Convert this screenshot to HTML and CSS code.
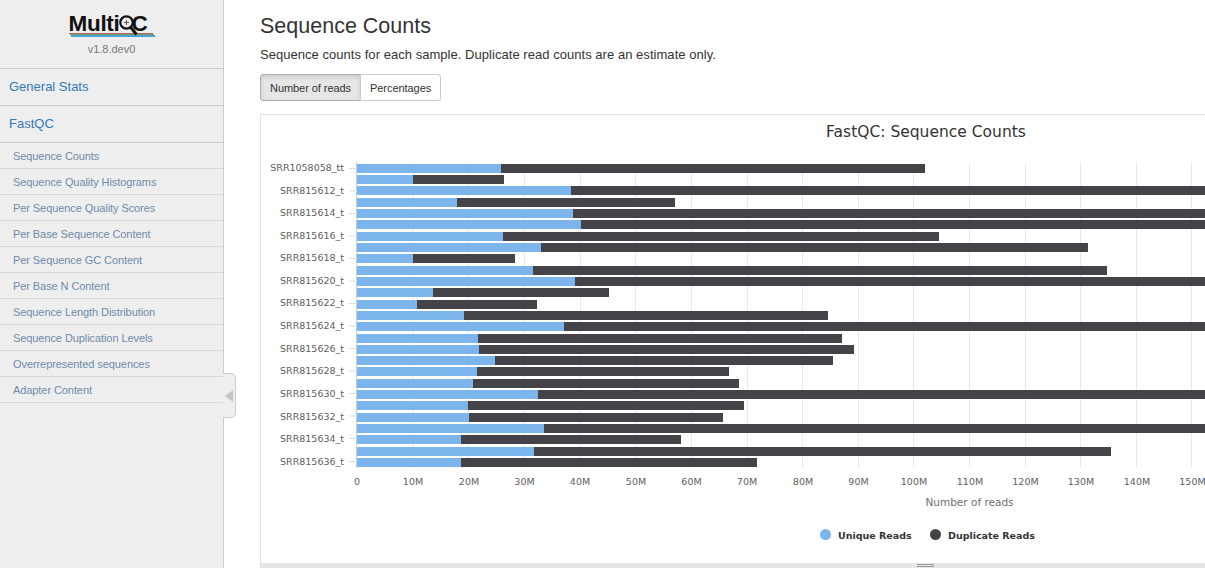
FILE: index.html
```html
<!DOCTYPE html>
<html lang="en">
<head>
<meta charset="utf-8">
<title>MultiQC Report</title>
<link rel="stylesheet" href="styles.css">
</head>
<body>
<div class="page">
  <nav class="sidebar">
    <div class="brand">
      <div class="logo">
        <span class="logo-word">Multi</span>
        <svg class="logo-q" width="21" height="24" viewBox="0 0 21 24"><circle cx="7.500" cy="8.500" r="6.200" fill="none" stroke="#111" stroke-width="2.200"/><path d="M7.500 6v5M5 8.500h5" stroke="#555" stroke-width="1"/><path d="M11.500 13l6 7.500" stroke="#111" stroke-width="3"/></svg>
        <span class="logo-word logo-c">C</span>
      </div>
      <div class="stripes"><i class="s-red"></i><i class="s-green"></i><i class="s-blue"></i></div>
      <div class="version">v1.8.dev0</div>
    </div>
    <ul class="menu">
      <li class="top"><a>General Stats</a></li>
      <li class="top"><a>FastQC</a></li>
      <li class="sub"><a>Sequence Counts</a></li>
      <li class="sub"><a>Sequence Quality Histograms</a></li>
      <li class="sub"><a>Per Sequence Quality Scores</a></li>
      <li class="sub"><a>Per Base Sequence Content</a></li>
      <li class="sub"><a>Per Sequence GC Content</a></li>
      <li class="sub"><a>Per Base N Content</a></li>
      <li class="sub"><a>Sequence Length Distribution</a></li>
      <li class="sub"><a>Sequence Duplication Levels</a></li>
      <li class="sub"><a>Overrepresented sequences</a></li>
      <li class="sub"><a>Adapter Content</a></li>
    </ul>
    <div class="toggle"><span class="arrow"></span></div>
  </nav>
  <main class="content">
    <h3 class="title">Sequence Counts</h3>
    <p class="lead">Sequence counts for each sample. Duplicate read counts are an estimate only.</p>
    <div class="btn-group">
      <button class="btn active">Number of reads</button>
      <button class="btn">Percentages</button>
    </div>
    <div class="panel">
      <svg class="chart" width="1330" height="448" viewBox="261 115 1330 448">
        <text class="chart-title" x="926" y="137" text-anchor="middle">FastQC: Sequence Counts</text>
        <g class="grid">
          <path d="M413 163V468M468.500 163V468M524.500 163V468M580.500 163V468M635.500 163V468M691.500 163V468M747.500 163V468M802.500 163V468M858.500 163V468M913.500 163V468M969.500 163V468M1025.500 163V468M1080.500 163V468M1136.500 163V468M1191.500 163V468"/>
        </g>
        <path class="axis" d="M356.500 163V468"/>
        <path class="tick" d="M349 168.500H357M349 191H357M349 213.500H357M349 236H357M349 258.500H357M349 281H357M349 303.500H357M349 326H357M349 348.500H357M349 371H357M349 393.500H357M349 416H357M349 438.500H357M349 461.500H357"/>
        <g class="blue">
          <rect x="357" y="164" width="144" height="9"/><rect x="357" y="175" width="56" height="9"/><rect x="357" y="186" width="214" height="9"/><rect x="357" y="198" width="100" height="9"/><rect x="357" y="209" width="216" height="9"/><rect x="357" y="220" width="224" height="9"/><rect x="357" y="232" width="146" height="9"/><rect x="357" y="243" width="184" height="9"/><rect x="357" y="254" width="56" height="9"/><rect x="357" y="266" width="176" height="9"/><rect x="357" y="277" width="218" height="9"/><rect x="357" y="288" width="76" height="9"/><rect x="357" y="300" width="60" height="9"/><rect x="357" y="311" width="107" height="9"/><rect x="357" y="322" width="207" height="9"/><rect x="357" y="334" width="121" height="9"/><rect x="357" y="345" width="122" height="9"/><rect x="357" y="356" width="138" height="9"/><rect x="357" y="367" width="120" height="9"/><rect x="357" y="379" width="116" height="9"/><rect x="357" y="390" width="181" height="9"/><rect x="357" y="401" width="111" height="9"/><rect x="357" y="413" width="112" height="9"/><rect x="357" y="424" width="187" height="9"/><rect x="357" y="435" width="104" height="9"/><rect x="357" y="447" width="177" height="9"/><rect x="357" y="458" width="104" height="9"/>
        </g>
        <g class="dark">
          <rect x="501" y="164" width="424" height="9"/><rect x="413" y="175" width="91" height="9"/><rect x="571" y="186" width="700" height="9"/><rect x="457" y="198" width="218" height="9"/><rect x="573" y="209" width="700" height="9"/><rect x="581" y="220" width="700" height="9"/><rect x="503" y="232" width="436" height="9"/><rect x="541" y="243" width="547" height="9"/><rect x="413" y="254" width="102" height="9"/><rect x="533" y="266" width="574" height="9"/><rect x="575" y="277" width="700" height="9"/><rect x="433" y="288" width="176" height="9"/><rect x="417" y="300" width="120" height="9"/><rect x="464" y="311" width="364" height="9"/><rect x="564" y="322" width="700" height="9"/><rect x="478" y="334" width="364" height="9"/><rect x="479" y="345" width="375" height="9"/><rect x="495" y="356" width="338" height="9"/><rect x="477" y="367" width="252" height="9"/><rect x="473" y="379" width="266" height="9"/><rect x="538" y="390" width="700" height="9"/><rect x="468" y="401" width="276" height="9"/><rect x="469" y="413" width="254" height="9"/><rect x="544" y="424" width="700" height="9"/><rect x="461" y="435" width="220" height="9"/><rect x="534" y="447" width="577" height="9"/><rect x="461" y="458" width="296" height="9"/>
        </g>
        <g class="ylabels" text-anchor="end">
          <text x="344" y="171">SRR1058058_tt</text><text x="344" y="194">SRR815612_t</text><text x="344" y="216">SRR815614_t</text><text x="344" y="239">SRR815616_t</text><text x="344" y="261">SRR815618_t</text><text x="344" y="284">SRR815620_t</text><text x="344" y="306">SRR815622_t</text><text x="344" y="329">SRR815624_t</text><text x="344" y="352">SRR815626_t</text><text x="344" y="374">SRR815628_t</text><text x="344" y="397">SRR815630_t</text><text x="344" y="420">SRR815632_t</text><text x="344" y="442">SRR815634_t</text><text x="344" y="465">SRR815636_t</text>
        </g>
        <g class="xlabels" text-anchor="middle">
          <text x="357" y="485">0</text><text x="413" y="485">10M</text><text x="469" y="485">20M</text><text x="524.500" y="485">30M</text><text x="580" y="485">40M</text><text x="636" y="485">50M</text><text x="691.500" y="485">60M</text><text x="747" y="485">70M</text><text x="803" y="485">80M</text><text x="858.500" y="485">90M</text><text x="914" y="485">100M</text><text x="970" y="485">110M</text><text x="1025.500" y="485">120M</text><text x="1081" y="485">130M</text><text x="1137" y="485">140M</text><text x="1192.500" y="485">150M</text>
        </g>
        <text class="axis-title" x="969.500" y="506" text-anchor="middle">Number of reads</text>
        <circle class="blue" cx="825.500" cy="534.500" r="5.500"/>
        <text class="legend" x="838" y="539">Unique Reads</text>
        <circle class="dark" cx="935.500" cy="534.500" r="5.500"/>
        <text class="legend" x="948" y="539">Duplicate Reads</text>
      </svg>
      <div class="resize"><span class="grip"></span></div>
    </div>
  </main>
</div>
</body>
</html>
```
FILE: styles.css
```css
* { box-sizing: border-box; }
html, body { margin: 0; height: 568px; overflow: hidden; background: #fff; }
body { font-family: "Liberation Sans", Arial, sans-serif; font-size: 14px; line-height: 20px; color: #333; }
.page { display: flex; height: 568px; overflow: hidden; }
.sidebar { position: relative; flex: 0 0 224px; background: #eee; border-right: 1px solid #ccc; }
.brand { height: 69px; padding-top: 12px; border-bottom: 1px solid #ccc; display: flex; flex-direction: column; align-items: center; }
.logo { display: flex; align-items: flex-start; width: 86px; height: 21px; color: #111; }
.logo-word { font: 700 22.500px/23px "Liberation Sans", Arial, sans-serif; letter-spacing: -0.3px; }
.logo-q { flex: none; margin: 2px 0 -5px 0; position: relative; z-index: 1; }
.logo-c { margin-left: -9px; }
.stripes { width: 86px; display: flex; flex-direction: column; }
.stripes i { display: block; height: 1px; }
.s-red { background: #b8605f; margin-right: 2px; }
.s-green { background: #68a868; margin-left: 1px; margin-right: 1px; }
.s-blue { background: #4a9fd8; height: 2px !important; margin-left: 2px; }
.version { margin-top: 5px; font-size: 11px; line-height: 14px; color: #777; }
.menu { list-style: none; margin: 0; padding: 0; }
.menu a { display: block; text-decoration: none; }
.top { height: 37px; border-bottom: 1px solid #ccc; }
.top a { padding: 7px 9px; color: #337ab7; font-size: 13px; line-height: 21px; }
.sub { height: 26.050px; border-bottom: 1px solid #d8d8d8; }
.sub a { padding: 5px 13px; color: #6f8bab; font-size: 11px; letter-spacing: -0.08px; line-height: 17px; }
.toggle { position: absolute; left: 223px; top: 373px; width: 13px; height: 45px; background: #eee; border: 1px solid #ccc; border-left: 0; border-radius: 0 5px 5px 0; display: flex; align-items: center; padding-left: 2px; }
.arrow { width: 0; height: 0; border: 6px solid transparent; border-left-width: 0; border-right: 8px solid #c4c4c4; }
.content { flex: 1 1 auto; min-width: 0; padding: 14px 0 0 36px; }
.title { margin: 0; font-size: 21.500px; line-height: 24px; font-weight: 400; color: #333; }
.lead { margin: 7px 0 0; font-size: 13px; letter-spacing: 0.04px; line-height: 20px; color: #333; }
.btn-group { display: flex; margin-top: 9px; }
.btn { height: 27px; padding: 0 9px; font: 11px/18px "Liberation Sans", Arial, sans-serif; letter-spacing: -0.06px; color: #333; background: #fff; border: 1px solid #ccc; border-radius: 0 3px 3px 0; margin-left: -1px; }
.btn.active { margin-left: 0; background: #e6e6e6; border-color: #adadad; border-radius: 3px 0 0 3px; box-shadow: inset 0 2px 4px rgba(0,0,0,.125); }
.panel { margin-top: 13px; width: 1332px; height: 454px; border: 1px solid #e0e0e0; border-bottom: 0; }
.chart { display: block; }
.chart text { font-family: "DejaVu Sans", sans-serif; }
.chart-title { font-size: 15.500px; fill: #333; }
.grid path { stroke: #e9e9e9; stroke-width: 1; fill: none; }
.axis { stroke: #c0d0e0; stroke-width: 1; fill: none; }
.tick { stroke: #d8dee8; stroke-width: 1; fill: none; }
.blue { fill: #7cb5ec; }
.dark { fill: #434348; }
.ylabels text, .xlabels text { font-size: 9.500px; fill: #606060; }
.axis-title { font-size: 10.500px; fill: #707070; }
.legend { font-size: 9.500px; font-weight: 700; fill: #333; }
.resize { height: 5px; background: #e6e6e6; position: relative; }
.grip { position: absolute; left: 656px; top: 1px; width: 17px; height: 3px; border-top: 1px solid #999; border-bottom: 1px solid #999; }
```
